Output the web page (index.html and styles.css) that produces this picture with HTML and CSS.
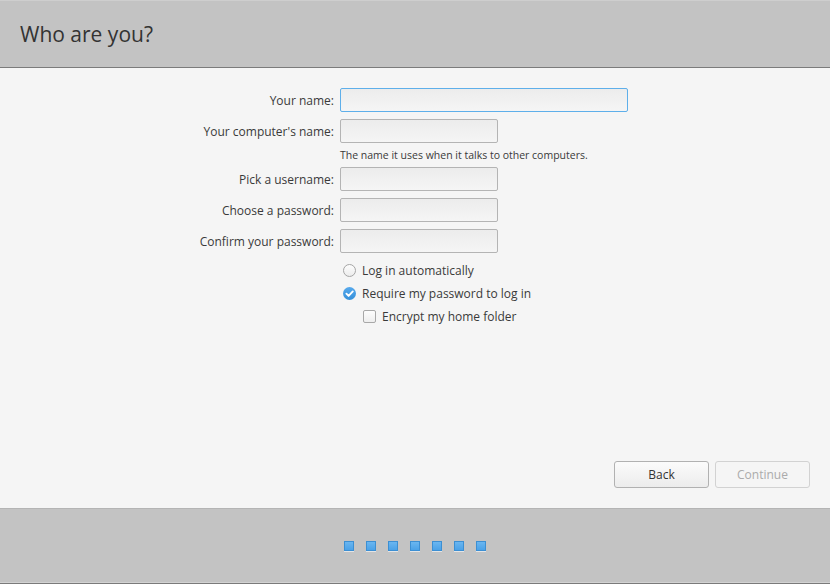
FILE: index.html
```html
<!DOCTYPE html>
<html>
<head>
<meta charset="utf-8">
<link rel="stylesheet" href="styles.css">
</head>
<body>
<div class="window">
  <header class="header">
    <h1 class="title">Who are you?</h1>
  </header>
  <main class="main">
    <div class="form">
      <label class="label">Your name:</label>
      <div class="field field-wide field-focus"></div>

      <label class="label">Your computer's name:</label>
      <div class="field"></div>

      <div></div>
      <div class="hint">The name it uses when it talks to other computers.</div>

      <label class="label">Pick a username:</label>
      <div class="field"></div>

      <label class="label">Choose a password:</label>
      <div class="field"></div>

      <label class="label">Confirm your password:</label>
      <div class="field"></div>

      <div></div>
      <div class="option option-first"><span class="radio"></span><span>Log in automatically</span></div>

      <div></div>
      <div class="option"><span class="radio radio-checked"><svg width="13" height="13" viewBox="0 0 13 13"><path d="M3.4 6.7 L5.6 8.9 L9.8 4.4" fill="none" stroke="#fff" stroke-width="1.9" stroke-linecap="round" stroke-linejoin="round"/></svg></span><span>Require my password to log in</span></div>

      <div></div>
      <div class="option option-indent"><span class="check"></span><span>Encrypt my home folder</span></div>
    </div>
    <div class="actions">
      <button class="btn">Back</button>
      <button class="btn btn-disabled">Continue</button>
    </div>
  </main>
  <footer class="footer">
    <div class="dots">
      <span class="dot"></span><span class="dot"></span><span class="dot"></span><span class="dot"></span><span class="dot"></span><span class="dot"></span><span class="dot"></span>
    </div>
  </footer>
</div>
</body>
</html>
```

FILE: styles.css
```css
html, body {
  margin: 0;
  padding: 0;
  height: 100%;
}
body {
  font-family: "Open Sans", "DejaVu Sans", sans-serif;
  color: #3a3a3a;
  background: #f5f5f5;
}
.window {
  display: flex;
  flex-direction: column;
  height: 584px;
  width: 830px;
}
.header {
  background: #c3c3c3;
  border-top: 1px solid #cecece;
  border-bottom: 1px solid #7b7b7b;
  box-sizing: border-box;
  height: 68px;
  display: flex;
  align-items: center;
  padding-left: 20px;
}
.title {
  margin: 0;
  font-weight: normal;
  font-size: 21px;
  color: #333;
  padding-bottom: 1px;
}
.main {
  flex: 1;
  display: flex;
  flex-direction: column;
  padding-top: 20px;
}
.form {
  display: grid;
  grid-template-columns: 334px auto;
  column-gap: 6px;
  row-gap: 7px;
  justify-content: start;
  font-size: 12px;
}
.label {
  text-align: right;
  align-self: center;
  line-height: 16px;
  padding-top: 1px;
  color: #3a3a3a;
}
.field {
  width: 158px;
  height: 24px;
  box-sizing: border-box;
  border: 1px solid #b4b4b4;
  border-radius: 2px;
  background: linear-gradient(#ececec, #f5f5f5);
}
.field-wide {
  width: 288px;
}
.field-focus {
  border-color: #5eafea;
}
.hint {
  font-size: 10.5px;
  line-height: 10px;
  height: 10px;
  color: #3a3a3a;
}
.option {
  display: flex;
  align-items: center;
  height: 16px;
  gap: 6px;
  padding-left: 3px;
  font-size: 12px;
  color: #3a3a3a;
}
.option-first {
  margin-top: 2px;
}
.option-indent {
  padding-left: 23px;
}
.radio {
  width: 13px;
  height: 13px;
  box-sizing: border-box;
  border-radius: 50%;
  border: 1px solid #a5a5a5;
  background: linear-gradient(#fdfdfd, #ececec);
  flex: none;
}
.radio-checked {
  border: none;
  background: linear-gradient(#56a9ec, #3690da);
  display: flex;
}
.check {
  width: 13px;
  height: 13px;
  box-sizing: border-box;
  border-radius: 2px;
  border: 1px solid #a8a8a8;
  background: linear-gradient(#fdfdfd, #eeeeee);
  flex: none;
}
.actions {
  margin-top: auto;
  display: flex;
  justify-content: flex-end;
  gap: 6px;
  padding: 0 20px 20px 0;
}
.btn {
  width: 95px;
  height: 27px;
  box-sizing: border-box;
  border: 1px solid #b1b1b1;
  border-radius: 3px;
  background: linear-gradient(#fbfbfb, #ececec);
  font-family: "Open Sans", "DejaVu Sans", sans-serif;
  font-size: 12px;
  color: #333;
  padding: 0;
}
.btn-disabled {
  border-color: #d2d2d2;
  background: #f5f5f5;
  color: #ababab;
}
.footer {
  height: 76px;
  box-sizing: border-box;
  background: #c3c3c3;
  border-top: 1px solid #b4b4b4;
  border-bottom: 1px solid #7a7a7a;
  box-shadow: inset 0 -1px 0 #d2d2d2;
  display: flex;
  align-items: center;
  justify-content: center;
}
.dots {
  display: flex;
  gap: 12px;
  margin-top: -1px;
}
.dot {
  width: 10px;
  height: 10px;
  box-sizing: border-box;
  border: 1px solid #3c8fd3;
  background: linear-gradient(#6ab6f0, #4aa2e8);
  box-shadow: 0 1px 0 #e4e4e4;
}
```
